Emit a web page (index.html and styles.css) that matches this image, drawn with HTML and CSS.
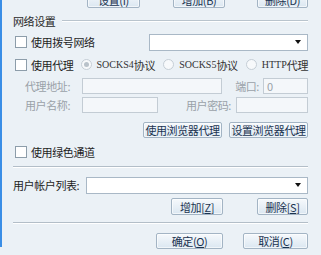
FILE: index.html
```html
<!DOCTYPE html>
<html lang="zh-CN">
<head>
    <meta charset="UTF-8">
    <title>网络设置</title>
    <link rel="stylesheet" href="styles.css">
</head>
<body>
<div class="dialog">
    <div class="row top-buttons">
        <button class="btn w53">设置(I)</button>
        <button class="btn w52">增加(B)</button>
        <button class="btn w51">删除(D)</button>
    </div>

    <div class="row legend">
        <span class="legend-text">网络设置</span>
        <span class="legend-line"></span>
    </div>

    <div class="row dialup">
        <span class="check"></span>
        <span class="check-label">使用拨号网络</span>
        <div class="select dialup-select"></div>
    </div>

    <div class="row proxy">
        <span class="check"></span>
        <span class="check-label proxy-label">使用代理</span>
        <span class="radio-item"><span class="radio on"></span><span class="latin">SOCKS4</span>协议</span>
        <span class="radio-item"><span class="radio"></span><span class="latin">SOCKS5</span>协议</span>
        <span class="radio-item last"><span class="radio"></span><span class="latin">HTTP</span>代理</span>
    </div>

    <div class="row field-row address">
        <span class="field-label">代理地址:</span>
        <span class="input addr-input"></span>
        <span class="field-label port-label">端口:</span>
        <span class="input grow">0</span>
    </div>

    <div class="row field-row user">
        <span class="field-label">用户名称:</span>
        <span class="input name-input"></span>
        <span class="field-label pass-label">用户密码:</span>
        <span class="input grow"></span>
    </div>

    <div class="row browser-buttons">
        <button class="btn w79">使用浏览器代理</button>
        <button class="btn w79">设置浏览器代理</button>
    </div>

    <div class="row green">
        <span class="check"></span>
        <span class="check-label">使用绿色通道</span>
    </div>

    <div class="separator sep-1"></div>

    <div class="row accounts">
        <span class="accounts-label">用户帐户列表:</span>
        <div class="select grow"></div>
    </div>

    <div class="row account-buttons">
        <button class="btn w52">增加[<u>Z</u>]</button>
        <button class="btn w51">删除[<u>S</u>]</button>
    </div>

    <div class="separator sep-2"></div>

    <div class="row ok-buttons">
        <button class="btn w67">确定(<u>O</u>)</button>
        <button class="btn w65">取消(<u>C</u>)</button>
    </div>
</div>
</body>
</html>
```

FILE: styles.css
```css
html, body {
    margin: 0;
    padding: 0;
    height: 100%;
    overflow: hidden;
}
body {
    font-family: "Noto Sans CJK SC", sans-serif;
    font-size: 11px;
    line-height: 14px;
    letter-spacing: -0.4px;
    white-space: nowrap;
    color: #1e1e1e;
    background-color: #ebf1f6;
}
.dialog {
    height: 100%;
    border-left: 2px solid #3a8ee6;
    padding: 0 13px 0 11px;
    box-sizing: border-box;
}
.row {
    display: flex;
    align-items: center;
}
.grow {
    flex: 1;
}

/* buttons */
.btn {
    height: 16px;
    padding: 0;
    font-family: inherit;
    font-size: 11px;
    line-height: 14px;
    letter-spacing: -0.4px;
    white-space: nowrap;
    color: #1b3350;
    border: 1px solid #a3b4c4;
    border-radius: 2px;
    background: linear-gradient(#f6f9fc, #dbe7f1);
    box-shadow: inset 0 0 0 1px rgba(255,255,255,0.6);
}
.btn u {
    text-decoration: underline;
}
.w51 { width: 51px; }
.w52 { width: 52px; }
.w53 { width: 53px; }
.w65 { width: 65px; }
.w67 { width: 67px; }
.w79 { width: 79px; }

.top-buttons {
    height: 16px;
    margin-top: -8px;
    justify-content: flex-end;
    gap: 33px;
}
.top-buttons .btn:last-child {
    margin-left: -1px;
}

/* group title */
.legend {
    height: 25px;
}
.legend-text {
    color: #2a2a2a;
}
.legend-line {
    flex: 1;
    margin-left: 7px;
    border-top: 1px solid #b9c4cd;
    border-bottom: 1px solid #fff;
}

/* checkbox and radio */
.check {
    width: 10px;
    height: 10px;
    margin-left: 2px;
    background: #fff;
    border: 1px solid #8d9daa;
    flex-shrink: 0;
}
.check-label {
    margin-left: 4px;
}
.dialup {
    height: 18px;
}
.dialup .check-label {
    width: 118px;
}
.dialup-select {
    flex: 1;
    height: 18px;
}

.proxy {
    height: 27px;
}
.proxy-label {
    width: 51px;
}
.radio-item {
    display: flex;
    align-items: center;
    width: 85px;
    color: #333;
}
.radio-item.last {
    width: auto;
}
.radio {
    width: 9px;
    height: 9px;
    border: 1px solid #c5ced6;
    border-radius: 50%;
    background: #f7f9fb;
    margin-right: 5px;
    position: relative;
    flex-shrink: 0;
}
.radio.on::after {
    content: "";
    position: absolute;
    left: 2px;
    top: 2px;
    width: 5px;
    height: 5px;
    border-radius: 50%;
    background: #b9c2ca;
}
.latin {
    font-family: "Liberation Serif", serif;
    font-size: 10px;
    letter-spacing: 0;
}

/* text fields */
.field-row {
    height: 16px;
}
.user {
    margin-top: 3px;
}
.field-label {
    color: #9aa1a8;
}
.address .field-label:first-child,
.user .field-label:first-child {
    margin-left: 12px;
    width: 57px;
}
.input {
    height: 14px;
    line-height: 14px;
    font-size: 11px;
    padding-left: 3px;
    color: #9aa1a8;
    background: #f4f7fa;
    border: 1px solid #c3ccd4;
    box-sizing: content-box;
}
.addr-input {
    width: 135px;
}
.port-label {
    width: 37px;
    text-align: right;
    padding-right: 4px;
}
.name-input {
    width: 71px;
}
.pass-label {
    width: 73px;
    text-align: right;
    padding-right: 5px;
}

.browser-buttons {
    height: 16px;
    margin-top: 9px;
    justify-content: flex-end;
    gap: 7px;
}

.green {
    height: 18px;
    margin-top: 5px;
}

/* separators */
.separator {
    border-top: 1px solid #b3bec8;
    border-bottom: 1px solid #fff;
}
.sep-1 {
    margin-top: 5px;
}
.sep-2 {
    margin-top: 7px;
}

/* account list */
.accounts {
    height: 16px;
    margin-top: 9px;
}
.accounts-label {
    width: 73px;
}
.select {
    height: 15px;
    background: #fff;
    border: 1px solid #a9b8c6;
    position: relative;
}
.select::after {
    content: "";
    position: absolute;
    right: 6px;
    top: 50%;
    margin-top: -2px;
    border-left: 3px solid transparent;
    border-right: 3px solid transparent;
    border-top: 4px solid #111;
}

.account-buttons {
    height: 17px;
    margin-top: 5px;
    justify-content: flex-end;
    gap: 34px;
}
.account-buttons .btn {
    height: 17px;
}

.ok-buttons {
    height: 16px;
    margin-top: 9px;
    justify-content: flex-end;
    gap: 20px;
}
```
